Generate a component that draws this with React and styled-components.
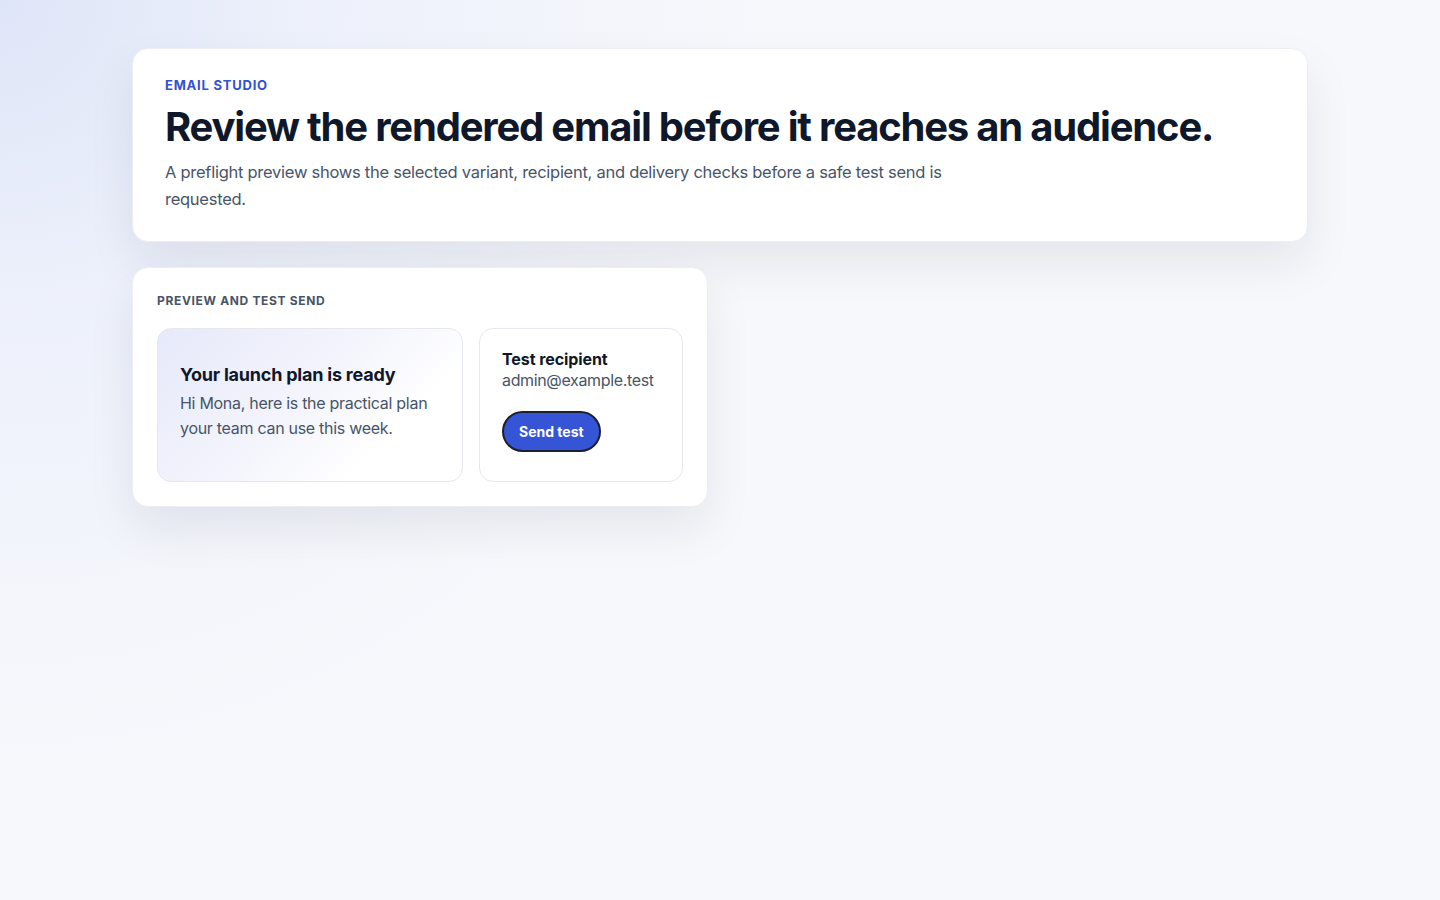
import React from "react";
import styled, { createGlobalStyle } from "styled-components";

const Global = createGlobalStyle`
  * { box-sizing: border-box; }
  html, body { margin: 0; padding: 0; }
  body {
    font-family: Inter, "Noto Sans", sans-serif;
    color: #0f172a;
    min-height: 100vh;
    background:
      radial-gradient(circle at 0% 0%, #dfe5f8 0%, rgba(236,240,251,0.9) 18%, rgba(246,247,252,0) 45%),
      #f7f8fc;
    background-attachment: fixed;
  }
`;

const Page = styled.main`
  max-width: 1176px;
  margin: 0 auto;
  padding: 48px 0;
  display: grid;
  grid-template-columns: 1fr 1fr;
  gap: 25px 24px;
  align-items: start;
`;

const Card = styled.section`
  background: #ffffff;
  border: 1px solid #eceef3;
  border-radius: 16px;
  box-shadow: 0 22px 48px rgba(15, 23, 42, 0.08);
  padding: ${(p) => p.$pad};
  grid-column: ${(p) => (p.$wide ? "1 / -1" : "auto")};
`;

const Eyebrow = styled.div`
  font-size: 13px;
  line-height: 16px;
  font-weight: 700;
  letter-spacing: 0.06em;
  text-transform: uppercase;
  color: #3451d1;
`;

const Title = styled.h1`
  margin: 11px 0 9px;
  font-size: 40px;
  line-height: 46px;
  font-weight: 700;
  letter-spacing: -0.03em;
  color: #0f172a;
  white-space: nowrap;
`;

const Lead = styled.p`
  margin: 0;
  max-width: 800px;
  font-size: 16.5px;
  line-height: 27px;
  letter-spacing: -0.016em;
  color: #475569;
`;

const SectionLabel = styled.h2`
  margin: 0 0 19px;
  font-size: 12px;
  line-height: 16px;
  font-weight: 700;
  letter-spacing: 0.055em;
  text-transform: uppercase;
  color: #475569;
`;

const PreviewGrid = styled.div`
  display: grid;
  grid-template-columns: 1.5fr 1fr;
  gap: 16px;
`;

const Pane = styled.div`
  border: 1px solid #e6e8ef;
  border-radius: 14px;
  padding: ${(p) => p.$pad};
  background: ${(p) =>
    p.$tinted
      ? "linear-gradient(135deg, #e6e9fa 0%, #f3f4fc 45%, #ffffff 75%)"
      : "#ffffff"};
`;

const EmailHeading = styled.h3`
  margin: 0 0 4px;
  font-size: 18px;
  line-height: 24px;
  font-weight: 700;
  letter-spacing: -0.012em;
  color: #0f172a;
`;

const EmailBody = styled.p`
  margin: 0;
  font-size: 16px;
  line-height: 25px;
  letter-spacing: -0.018em;
  color: #475569;
`;

const FieldLabel = styled.div`
  font-size: 16px;
  line-height: 21px;
  font-weight: 700;
  letter-spacing: -0.005em;
  color: #0f172a;
`;

const FieldValue = styled.div`
  font-size: 16px;
  line-height: 21px;
  letter-spacing: -0.022em;
  color: #475569;
`;

const SendButton = styled.button`
  margin-top: 20px;
  height: 41px;
  padding: 0 15px;
  border-radius: 999px;
  border: 2px solid #1b1f2e;
  background: #3554d6;
  color: #ffffff;
  font-family: Inter, "Noto Sans", sans-serif;
  font-size: 14px;
  font-weight: 700;
  cursor: pointer;
`;

export default function App() {
  return (
    <>
      <Global />
      <Page>
        <Card $wide $pad="28px 32px 28px">
          <Eyebrow>Email Studio</Eyebrow>
          <Title>Review the rendered email before it reaches an audience.</Title>
          <Lead>
            A preflight preview shows the selected variant, recipient, and
            delivery checks before a safe test send is requested.
          </Lead>
        </Card>
        <Card $pad="25px 24px 24px">
          <SectionLabel>Preview and test send</SectionLabel>
          <PreviewGrid>
            <Pane $tinted $pad="34px 22px">
              <EmailHeading>Your launch plan is ready</EmailHeading>
              <EmailBody>
                Hi Mona, here is the practical plan your team can use this week.
              </EmailBody>
            </Pane>
            <Pane $pad="20px 22px 29px">
              <FieldLabel>Test recipient</FieldLabel>
              <FieldValue>admin@example.test</FieldValue>
              <SendButton type="button">Send test</SendButton>
            </Pane>
          </PreviewGrid>
        </Card>
      </Page>
    </>
  );
}
